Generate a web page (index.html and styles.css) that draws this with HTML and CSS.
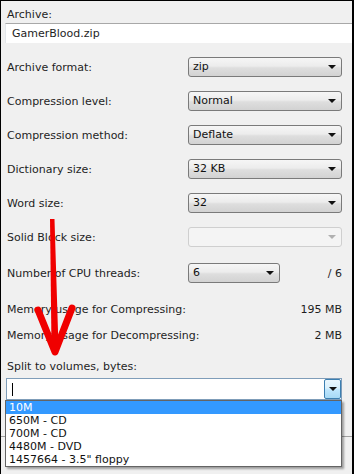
FILE: index.html
```html
<!DOCTYPE html>
<html>
<head>
<meta charset="utf-8">
<link rel="stylesheet" href="styles.css">
</head>
<body>
<div class="frame">
  <div class="lbl first">Archive:</div>
  <div class="archive">GamerBlood.zip</div>

  <div class="rows">
    <div class="row"><span>Archive format:</span><div class="combo"><span>zip</span><i class="tri"></i></div></div>
    <div class="row"><span>Compression level:</span><div class="combo"><span>Normal</span><i class="tri"></i></div></div>
    <div class="row"><span>Compression method:</span><div class="combo"><span>Deflate</span><i class="tri"></i></div></div>
    <div class="row"><span>Dictionary size:</span><div class="combo"><span>32 KB</span><i class="tri"></i></div></div>
    <div class="row"><span>Word size:</span><div class="combo"><span>32</span><i class="tri"></i></div></div>
    <div class="row"><span>Solid Block size:</span><div class="combo disabled"><span></span><i class="tri"></i></div></div>
    <div class="row cpu"><span>Number of CPU threads:</span><div class="combo"><span>6</span><i class="tri"></i></div><span class="num">/ 6</span></div>
  </div>

  <div class="mem">
    <div class="memrow"><span>Memory usage for Compressing:</span><span>195 MB</span></div>
    <div class="memrow"><span>Memory usage for Decompressing:</span><span>2 MB</span></div>
  </div>

  <div class="lbl split">Split to volumes, bytes:</div>
  <div class="splitwrap">
    <div class="editcombo">
      <span class="caret"></span>
      <div class="btn"><i class="tri"></i></div>
    </div>
    <ul class="list">
      <li class="sel">10M</li>
      <li>650M - CD</li>
      <li>700M - CD</li>
      <li>4480M - DVD</li>
      <li>1457664 - 3.5" floppy</li>
    </ul>
  </div>
  <div class="sep"></div>

  <svg class="arrow" width="354" height="474" viewBox="0 0 354 474">
    <path d="M50 219 L54.5 219 L58.5 348 L51.5 348 Z" fill="#f00000"/>
    <path d="M38 310 L55 352 L72 308" fill="none" stroke="#f00000" stroke-width="7" stroke-linecap="round" stroke-linejoin="round"/>
  </svg>
</div>
</body>
</html>
```

FILE: styles.css
```css
html, body {
  margin: 0;
  padding: 0;
  background: #f0f0f0;
}
.frame {
  position: relative;
  width: 354px;
  height: 474px;
  box-sizing: border-box;
  border-top: 1px solid #000;
  border-left: 1px solid #000;
  border-right: 2px solid #000;
  padding: 0 10px 0 6px;
  background: #f0f0f0;
  font-family: "DejaVu Sans", Verdana, sans-serif;
  font-size: 11px;
  color: #1e1e1e;
  overflow: hidden;
}
.lbl {
  line-height: 16px;
}
.lbl.first {
  padding-top: 6px;
}
.archive {
  margin: 0 -10px 0 -2px;
  height: 20px;
  line-height: 20px;
  box-sizing: border-box;
  background: #fff;
  border-top: 1px solid #a8a8a8;
  border-left: 1px solid #e2e6ea;
  padding-left: 6px;
}
.rows {
  margin-top: 7px;
}
.row {
  display: grid;
  grid-template-columns: 181px 154px;
  align-items: center;
  height: 34px;
}
.row.cpu {
  grid-template-columns: 181px 92px 1fr;
  margin-top: 2px;
}
.num {
  text-align: right;
}
.combo {
  position: relative;
  height: 20px;
  box-sizing: border-box;
  border: 1px solid #7a7a7a;
  border-radius: 3px;
  background: linear-gradient(#f6f6f6 0%, #ececec 45%, #dedede 55%, #d2d2d2 100%);
  padding-left: 4px;
  line-height: 18px;
  color: #111;
}
.combo .tri {
  position: absolute;
  right: 5px;
  top: 7px;
  width: 0;
  height: 0;
  border-left: 4px solid transparent;
  border-right: 4px solid transparent;
  border-top: 4px solid #111;
}
.combo.disabled {
  border-color: #cfcfcf;
  background: #f4f4f4;
}
.combo.disabled .tri {
  border-top-color: #b0b0b0;
}
.mem {
  margin-top: 7px;
}
.memrow {
  display: flex;
  justify-content: space-between;
  height: 26px;
  line-height: 26px;
}
.lbl.split {
  margin-top: 10px;
}
.splitwrap {
  position: relative;
  margin: 3px 0 0 -1px;
}
.editcombo {
  position: relative;
  height: 22px;
  box-sizing: border-box;
  border: 1px solid #7f9db9;
  background: #fff;
}
.caret {
  position: absolute;
  left: 5px;
  top: 4px;
  width: 1px;
  height: 13px;
  background: #000;
}
.btn {
  position: absolute;
  right: 0;
  top: 0;
  width: 17px;
  height: 20px;
  box-sizing: border-box;
  border: 1px solid #3c7fb1;
  border-radius: 2px;
  background: linear-gradient(#eaf6fd 0%, #d9f0fc 45%, #bee6fd 55%, #a7d9f5 100%);
}
.btn .tri {
  position: absolute;
  left: 4px;
  top: 7px;
  width: 0;
  height: 0;
  border-left: 4px solid transparent;
  border-right: 4px solid transparent;
  border-top: 4px solid #111;
}
.list {
  position: absolute;
  left: -1px;
  top: 100%;
  width: 337px;
  margin: 0;
  padding: 0;
  list-style: none;
  box-sizing: border-box;
  border: 1px solid #646464;
  background: #fff;
  box-shadow: 2px 2px 2px rgba(0, 0, 0, 0.35);
  z-index: 2;
}
.list li {
  height: 13px;
  line-height: 13px;
  padding-left: 3px;
  color: #111;
}
.list li.sel {
  background: #3399ff;
  color: #fff;
}
.sep {
  margin: 36px -10px 0 -6px;
  border-top: 1px solid #a0a0a0;
}
.arrow {
  position: absolute;
  left: -1px;
  top: -1px;
  z-index: 3;
  pointer-events: none;
}
```
